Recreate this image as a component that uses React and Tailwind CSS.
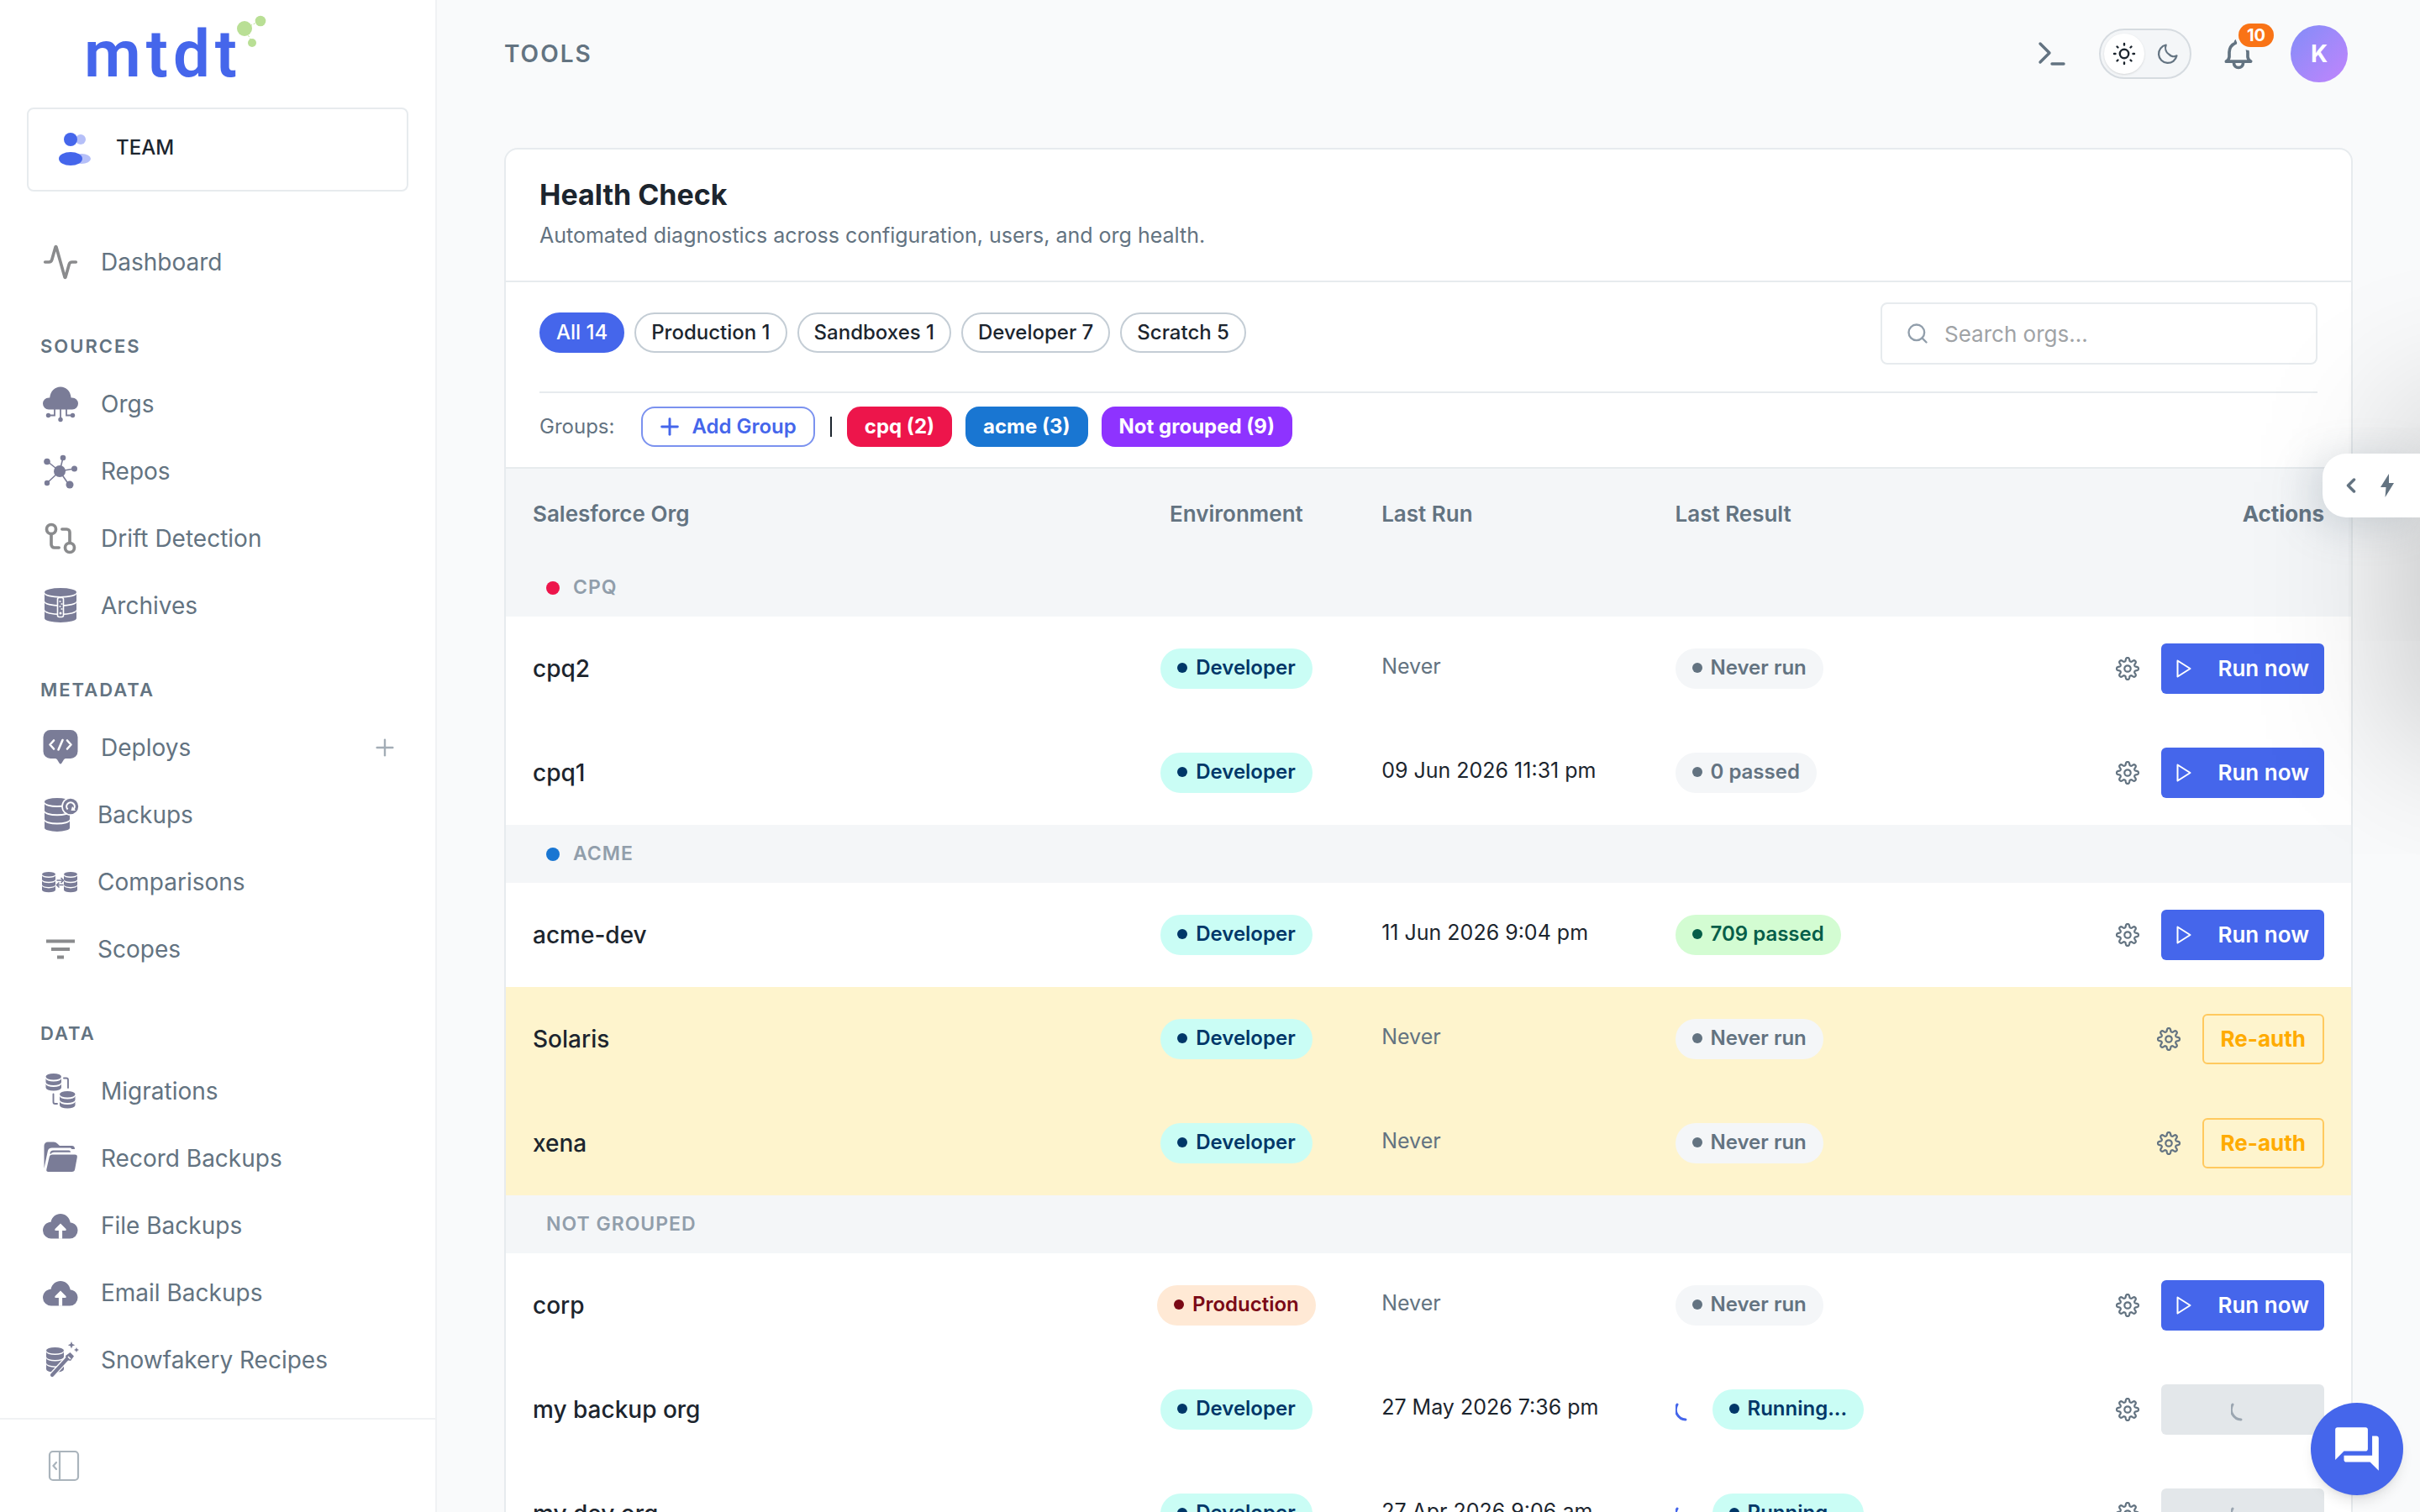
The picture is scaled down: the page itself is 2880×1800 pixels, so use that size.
import React from "react";
import { Activity, GitCompare, Plus, Search, ChevronLeft } from "lucide-react";
import { MdForum } from "react-icons/md";

const SLATE = "#7a7c97";

/* ---------- drawing helpers ---------- */

function Disks({ x, y, w, band, gap, ry, count, fill = SLATE }) {
  const rx = w / 2;
  const bands = [];
  for (let i = 0; i < count; i++) {
    const top = y + ry + gap + i * (band + gap);
    bands.push(
      <path
        key={i}
        d={`M${x} ${top}a${rx} ${ry} 0 0 0 ${w} 0v${band}a${rx} ${ry} 0 0 1 ${-w} 0z`}
        fill={fill}
      />
    );
  }
  return (
    <g>
      <ellipse cx={x + rx} cy={y + ry} rx={rx} ry={ry} fill={fill} />
      {bands}
    </g>
  );
}

function Icon44({ children }) {
  return (
    <svg viewBox="0 0 44 44" className="size-11 shrink-0" aria-hidden="true">
      {children}
    </svg>
  );
}

const OrgsIcon = () => (
  <Icon44>
    <path
      d="M8 28.5a7 7 0 0 1 0-14h1.2C10 6.500 15.500 1.500 22 1.500S34 6.500 34.600 14.500H36a7 7 0 0 1 0 14z"
      fill={SLATE}
    />
    <g stroke={SLATE} strokeWidth="1.800" fill="none">
      <path d="M22 28v12M15 28v7.500H8M29 28v7.500h7" />
    </g>
    <circle cx="7.500" cy="35.500" r="2.700" fill={SLATE} />
    <circle cx="36.500" cy="35.500" r="2.700" fill={SLATE} />
    <circle cx="22" cy="40.500" r="2.700" fill={SLATE} />
  </Icon44>
);

const ReposIcon = () => (
  <Icon44>
    <g stroke={SLATE} strokeWidth="1.600">
      <path d="M21 22 6 10M21 22l4-16M21 22l17-3M21 22 6 36M21 22l11 16" />
    </g>
    <circle cx="21" cy="22" r="7" fill={SLATE} />
    <circle cx="6" cy="10.500" r="3.800" fill={SLATE} />
    <circle cx="25" cy="6" r="3.300" fill={SLATE} />
    <circle cx="38.500" cy="19" r="3.500" fill={SLATE} />
    <circle cx="6" cy="36" r="3.200" fill={SLATE} />
    <circle cx="33" cy="38" r="4.500" fill={SLATE} />
  </Icon44>
);

const ArchivesIcon = () => (
  <Icon44>
    <Disks x={3} y={1} w={38} ry={5} band={8.6} gap={1.7} count={3} />
    <rect x="18.500" y="12.500" width="7" height="23" rx="2" fill={SLATE} stroke="#fff" strokeWidth="1.600" />
    <path d="M20.500 17h2M22.500 20h2M20.500 23h2M22.500 26h2" stroke="#fff" strokeWidth="1.600" />
    <circle cx="22" cy="31" r="1.500" fill="#fff" />
  </Icon44>
);

const DeploysIcon = () => (
  <Icon44>
    <path
      d="M10 1h24a8.500 8.500 0 0 1 8.500 8.500v17A8.500 8.500 0 0 1 34 35h-5.500q-1.500 0-2.500 1.300l-2.600 4.300q-1.400 2-2.800 0L18 36.300Q17 35 15.500 35H10a8.500 8.500 0 0 1-8.500-8.500v-17A8.500 8.500 0 0 1 10 1z"
      fill={SLATE}
    />
    <path
      d="M14 13.500 9.500 18.500l4.500 5M30 13.500l4.500 5-4.500 5M24.500 13l-5 11.500"
      fill="none"
      stroke="#fff"
      strokeWidth="2.600"
      strokeLinecap="round"
      strokeLinejoin="round"
    />
  </Icon44>
);

const BackupsIcon = () => (
  <Icon44>
    <Disks x={3} y={2} w={30} ry={4.5} band={8.3} gap={2} count={3} />
    <circle cx="34" cy="12" r="10.800" fill="#fff" />
    <circle cx="34" cy="12" r="9.200" fill={SLATE} />
    <path d="M30.600 15.500a4.800 4.800 0 1 1 6.800 0" fill="none" stroke="#fff" strokeWidth="2.200" />
    <path d="M34.500 17h5.500l-4-5z" fill="#fff" />
  </Icon44>
);

const ComparisonsIcon = () => (
  <Icon44>
    <Disks x={0} y={10} w={16} ry={2.8} band={4.8} gap={1.4} count={3} />
    <Disks x={26} y={10} w={16} ry={2.8} band={4.8} gap={1.4} count={3} />
    <g fill="none" stroke="#fff" strokeWidth="5">
      <path d="M17 20h8M17 25.500h8" />
    </g>
    <g fill="none" stroke={SLATE} strokeWidth="1.600">
      <path d="M17.500 20h8M22.500 17l3 3-3 3M25.500 25.500h-8M20.500 22.500l-3 3 3 3" />
    </g>
  </Icon44>
);

const ScopesIcon = () => (
  <Icon44>
    <g fill="#8a8b8d">
      <rect x="5" y="10.500" width="34" height="4" />
      <rect x="11" y="20" width="22" height="4" />
      <rect x="18" y="29.500" width="8" height="4" />
    </g>
  </Icon44>
);

const MigrationsIcon = () => (
  <Icon44>
    <Disks x={4.5} y={1} w={18.5} ry={3.8} band={4.6} gap={1.9} count={2} />
    <Disks x={21} y={22} w={18.5} ry={3.8} band={4.6} gap={1.9} count={2} />
    <g fill="none" stroke={SLATE} strokeWidth="1.900" strokeLinecap="round">
      <path d="M26 6.500h3a2 2 0 0 1 2 2V18" />
      <path d="M13.500 25.500v9.500a2 2 0 0 0 2 2H18" />
    </g>
  </Icon44>
);

const FolderIcon = () => (
  <Icon44>
    <path d="M2.500 34V7a4.500 4.500 0 0 1 4.500-4.500h7q2.500 0 4 1.700L21 7h14.500q3.500 0 3.500 4h-3.500L34 9.500H12q-4.500 0-5.200 4z" fill={SLATE} />
    <path d="M9.500 16q.300-3.500 4-3.500H32q2 0 2 2.200H14q-3 0-4 2.500z" fill={SLATE} />
    <path
      d="M12.500 17.500H39q3.300 0 2.800 3.300l-2.600 14q-.500 3.200-3.700 3.200H7.500q-2.700 0-2.200-2.700l3.300-14.600q.600-3.200 3.900-3.200z"
      fill={SLATE}
    />
  </Icon44>
);

const CloudUpIcon = () => (
  <Icon44>
    <path
      d="M11 37.500A9.800 9.800 0 0 1 1 28c0-5.600 4.200-10 9.500-10.200C12 11.500 16.500 8 22 8s10.500 4 11.800 10.500c5.200.500 8.700 4.200 8.700 9.300a9.500 9.500 0 0 1-9.500 9.700z"
      fill={SLATE}
    />
    <path d="M22 19.500 15.500 26q-.800 2 1.200 2h3.200v9.700h4.200V28h3.200q2 0 1.200-2z" fill="#fff" />
  </Icon44>
);

const RecipesIcon = () => (
  <Icon44>
    <Disks x={5} y={7} w={21} ry={3.8} band={5.9} gap={1.5} count={3} />
    <path d="M11 41 33 17" stroke="#fff" strokeWidth="7" />
    <path d="M12 40 30 20.500" stroke={SLATE} strokeWidth="4.200" strokeLinecap="round" />
    <path d="m29 22-1-5 5.500-4 4.500 4.500-4 5.500z" fill={SLATE} />
    <path d="m31 18 3 3" stroke="#fff" strokeWidth="1.500" />
    <path d="m35 0 1.200 3 3 1.200-3 1.200L35 8.400l-1.200-3-3-1.200 3-1.200zM41 7l.900 2.100 2.100.900-2.100.900L41 13l-.900-2.100L38 10l2.100-.900z" fill={SLATE} />
  </Icon44>
);

const gearPath = (() => {
  const pts = [];
  for (let i = 0; i < 192; i++) {
    const a = (i / 192) * Math.PI * 2;
    const r = 11 + 2.1 * Math.tanh(1.6 * Math.cos(8 * a));
    pts.push(`${(16 + r * Math.cos(a)).toFixed(2)} ${(16 + r * Math.sin(a)).toFixed(2)}`);
  }
  return `M${pts.join("L")}Z`;
})();

const Gear = () => (
  <svg viewBox="0 0 32 32" className="size-8" fill="none" stroke="#637381" strokeWidth="2.200" aria-hidden="true">
    <path d={gearPath} strokeLinejoin="round" />
    <circle cx="16" cy="16" r="3.700" />
  </svg>
);

/* ---------- sidebar ---------- */

const NAV = [
  {
    title: "SOURCES",
    items: [
      { label: "Orgs", icon: <OrgsIcon /> },
      { label: "Repos", icon: <ReposIcon /> },
      { label: "Drift Detection", icon: <GitCompare className="size-11 shrink-0 text-[#8a8b8d]" /> },
      { label: "Archives", icon: <ArchivesIcon /> },
    ],
  },
  {
    title: "METADATA",
    items: [
      { label: "Deploys", icon: <DeploysIcon />, add: true },
      { label: "Backups", icon: <BackupsIcon />, tight: true },
      { label: "Comparisons", icon: <ComparisonsIcon />, tight: true },
      { label: "Scopes", icon: <ScopesIcon />, tight: true },
    ],
  },
  {
    title: "DATA",
    items: [
      { label: "Migrations", icon: <MigrationsIcon /> },
      { label: "Record Backups", icon: <FolderIcon /> },
      { label: "File Backups", icon: <CloudUpIcon /> },
      { label: "Email Backups", icon: <CloudUpIcon /> },
      { label: "Snowfakery Recipes", icon: <RecipesIcon /> },
    ],
  },
];

function NavItem({ label, icon, add, tight }) {
  return (
    <li className="flex h-20 items-center pr-3">
      <a href="#" className={`flex flex-1 items-center pl-[18px] text-[28px] text-[#637381] ${tight ? "gap-[22px]" : "gap-[26px]"}`}>
        {icon}
        {label}
      </a>
      {add && (
        <button aria-label="New deploy" className="text-[#a3adb6]">
          <Plus className="size-8" strokeWidth={1.8} />
        </button>
      )}
    </li>
  );
}

function Sidebar() {
  return (
    <aside className="flex w-[520px] shrink-0 flex-col border-r-2 border-[#f0f2f4] bg-white">
      <div className="flex h-32 items-start pl-[100px]">
        <a href="#" aria-label="mtdt home">
          <svg viewBox="0 0 220 110" className="h-[110px] w-[220px]">
            <text x="0" y="91" fontFamily="Roboto, sans-serif" fontWeight="600" fontSize="78" fill="#4566eb" className="tracking-[6px]">
              mtdt
            </text>
            <path d="m191 34 18-9M192 35l8 16" stroke="#b9df95" strokeWidth="1" strokeDasharray="2 2" />
            <circle cx="191" cy="34" r="9" fill="#b9df95" />
            <circle cx="210" cy="25" r="6.300" fill="#b9df95" />
            <circle cx="200" cy="51" r="5" fill="#b9df95" />
          </svg>
        </a>
      </div>
      <button className="mx-8 flex h-[100px] items-center gap-6 rounded-lg border-2 border-[#e7ebee] pb-1 pl-9 text-2xl font-medium text-[#1c252e]">
        <svg viewBox="0 0 44 44" className="size-11" aria-hidden="true">
          <circle cx="26" cy="12" r="6" fill="#b5bff8" />
          <ellipse cx="27" cy="35" rx="11" ry="6" fill="#b5bff8" />
          <circle cx="14" cy="12" r="8" fill="#4566eb" />
          <ellipse cx="14" cy="35" rx="14" ry="8" fill="#4566eb" />
        </svg>
        TEAM
      </button>
      <nav className="flex-1 px-8 pt-11">
        <ul>
          <NavItem label="Dashboard" icon={<Activity className="size-11 shrink-0 text-[#8a8b8d]" />} />
        </ul>
        {NAV.map((g) => (
          <section key={g.title} className="pt-8">
            <h2 className="flex h-[57px] items-center pl-4 text-[22px] font-semibold tracking-[2px] text-[#637381]">{g.title}</h2>
            <ul>
              {g.items.map((it) => (
                <NavItem key={it.label} {...it} />
              ))}
            </ul>
          </section>
        ))}
      </nav>
      <div className="flex h-28 shrink-0 items-center border-t-2 border-[#f0f2f4] pl-14">
        <button aria-label="Collapse sidebar">
          <svg viewBox="0 0 40 40" className="size-10" fill="none" stroke="#aab4bc" strokeWidth="2.200" aria-hidden="true">
            <rect x="3" y="3" width="34" height="34" rx="4" />
            <path d="M15 3v34" />
            <path d="m11 16-3.500 4 3.500 4" strokeLinecap="round" />
          </svg>
        </button>
      </div>
    </aside>
  );
}

/* ---------- top bar ---------- */

function TopBar() {
  return (
    <header className="flex h-32 shrink-0 items-center justify-between pl-20 pr-[86px]">
      <h1 className="text-[28px] font-semibold tracking-[2px] text-[#637381]">TOOLS</h1>
      <div className="flex items-center">
        <button aria-label="Terminal" className="mr-[38px]">
          <svg viewBox="0 0 36 36" className="size-9" fill="none" stroke="#637381" strokeWidth="3.400" strokeLinecap="round" strokeLinejoin="round" aria-hidden="true">
            <path d="m4 6 11 11L4 28M18 30h14" />
          </svg>
        </button>
        <button aria-label="Toggle theme" className="mr-[34px] flex h-[60px] w-[110px] items-center gap-1 rounded-full border-2 border-[#d6dbe0] bg-[#f4f6f8] pl-1">
          <span className="flex size-12 items-center justify-center rounded-full bg-white shadow-sm">
            <svg viewBox="0 0 28 28" className="size-7" fill="none" stroke="#1c252e" strokeWidth="2.400" strokeLinecap="round" aria-hidden="true">
              <circle cx="14" cy="14" r="5.200" />
              <path d="M14 2v1.500M14 24.500V26M2 14h1.500M24.500 14H26M5.500 5.500l1 1M21.500 21.500l1 1M5.500 22.500l1-1M21.500 6.500l1-1" />
            </svg>
          </span>
          <span className="flex size-12 items-center justify-center">
            <svg viewBox="0 0 24 24" className="size-7" fill="none" stroke="#637381" strokeWidth="1.900" strokeLinejoin="round" aria-hidden="true">
              <path d="M10 3a9.300 9.300 0 1 0 11 11 6.500 6.500 0 0 1-8-1.500A8 8 0 0 1 10 3z" />
            </svg>
          </span>
        </button>
        <button aria-label="Notifications, 10 unread" className="relative mr-5 pr-5">
          <svg viewBox="0 0 24 24" className="size-11" fill="none" stroke="#637381" strokeWidth="2" strokeLinecap="round" strokeLinejoin="round" aria-hidden="true">
            <path d="M10 5a2 2 0 1 1 4 0a7 7 0 0 1 4 6v3a4 4 0 0 0 2 3h-16a4 4 0 0 0 2-3v-3a7 7 0 0 1 4-6M9 17v1a3 3 0 0 0 6 0v-1" />
          </svg>
          <span className="absolute -top-3.5 left-[22px] flex h-7 w-[42px] items-center justify-center rounded-full bg-[#f97316] text-xl font-bold text-white ring-4 ring-[#f9fafb]">
            10
          </span>
        </button>
        <button aria-label="Account" className="flex size-[68px] items-center justify-center rounded-full bg-linear-to-br from-[#818cf8] to-[#c084fc] text-[28px] font-bold text-white">
          K
        </button>
      </div>
    </header>
  );
}

/* ---------- health check ---------- */

const FILTERS = ["All 14", "Production 1", "Sandboxes 1", "Developer 7", "Scratch 5"];

const TONES = {
  Developer: "bg-[#cafdf5] text-[#003768]",
  Production: "bg-[#ffe9d5] text-[#7a0916]",
  "Never run": "bg-[#f4f6f8] text-[#637381]",
  "0 passed": "bg-[#f4f6f8] text-[#637381]",
  "709 passed": "bg-[#d3fcd2] text-[#065e49]",
  "Running...": "bg-[#cafdf5] text-[#003768]",
};

const GROUPS = [
  {
    name: "CPQ",
    dot: "bg-[#ed154b]",
    rows: [
      { org: "cpq2", env: "Developer", result: "Never run" },
      { org: "cpq1", env: "Developer", run: "09 Jun 2026 11:31 pm", result: "0 passed" },
    ],
  },
  {
    name: "ACME",
    dot: "bg-[#1976d2]",
    rows: [
      { org: "acme-dev", env: "Developer", run: "11 Jun 2026 9:04 pm", result: "709 passed" },
      { org: "Solaris", env: "Developer", result: "Never run", expired: true },
      { org: "xena", env: "Developer", result: "Never run", expired: true },
    ],
  },
  {
    name: "NOT GROUPED",
    rows: [
      { org: "corp", env: "Production", result: "Never run" },
      { org: "my backup org", env: "Developer", run: "27 May 2026 7:36 pm", result: "Running..." },
      { org: "my dev org", env: "Developer", run: "27 Apr 2026 9:06 am", result: "Running..." },
    ],
  },
];

function Badge({ children }) {
  return (
    <span className={`inline-flex h-12 items-center gap-2.5 rounded-full px-5 pb-0.5 align-middle text-2xl font-semibold ${TONES[children]}`}>
      <span className="size-3 rounded-full bg-current" />
      {children}
    </span>
  );
}

function Arc({ color }) {
  return (
    <svg viewBox="0 0 28 28" className="size-7" fill="none" stroke={color} strokeWidth="3" strokeLinecap="round" aria-hidden="true">
      <path d="M2 8A12 12 0 0 0 12 26" />
    </svg>
  );
}

function Row({ org, env, run, result, expired }) {
  const running = result === "Running...";
  return (
    <tr className={`h-[124px] ${expired ? "bg-[#fef4cd]" : ""}`}>
      <td className="pl-8 text-[28px] font-medium text-[#1c252e]">{org}</td>
      <td className="pl-1 text-center">
        <Badge>{env}</Badge>
      </td>
      <td className={`pb-1 pl-8 text-[25px] ${run ? "text-[#1c252e]" : "text-[#637381]"}`}>{run || "Never"}</td>
      <td className="pl-[30px]">
        <div className="flex items-center gap-4">
          {running && <Arc color="#4566eb" />}
          <Badge>{result}</Badge>
        </div>
      </td>
      <td className="pr-8">
        <div className="flex items-center justify-end gap-6">
          <button aria-label={`Settings for ${org}`}>
            <Gear />
          </button>
          {expired ? (
            <button className="h-[60px] rounded-md border-2 border-[#ffc95e] px-5 pb-0.5 text-[26px] font-bold text-[#ffab00]">Re-auth</button>
          ) : running ? (
            <button disabled aria-label={`${org} is running`} className="flex h-[60px] w-[194px] items-center justify-center rounded-md bg-[#e3e7ea]">
              <Arc color="#9ba6b1" />
            </button>
          ) : (
            <button className="flex h-[60px] w-[194px] items-center justify-between rounded-md bg-[#4566eb] px-[18px] text-[26px] font-semibold text-white">
              <svg viewBox="0 0 18 22" className="h-[22px] w-[18px]" fill="none" stroke="#fff" strokeWidth="2" strokeLinejoin="round" aria-hidden="true">
                <path d="m1.500 1.500 15 9.500-15 9.500z" />
              </svg>
              <span className="pb-0.5">Run now</span>
            </button>
          )}
        </div>
      </td>
    </tr>
  );
}

function HealthCheck() {
  return (
    <section className="overflow-hidden rounded-t-2xl border-2 border-[#e7ebee] bg-white">
      <div className="flex flex-col gap-2 border-b-2 border-[#e7ebee] px-10 pb-9 pt-8">
        <h2 className="text-[34px] leading-[44px] font-bold text-[#1c252e]">Health Check</h2>
        <p className="text-[25px] leading-9 text-[#637381]">Automated diagnostics across configuration, users, and org health.</p>
      </div>

      <div className="flex flex-col border-b-2 border-[#e7ebee] px-10">
        <div className="flex items-start justify-between border-b-2 border-[#e7ebee] pt-6 pb-8">
          <div className="flex gap-3 pt-3">
            {FILTERS.map((f, i) => (
              <button
                key={f}
                className={`h-12 rounded-full border-2 px-[18px] text-2xl leading-none font-medium ${
                  i === 0 ? "border-[#4566eb] bg-[#4566eb] text-white" : "border-[#c4cdd5] text-[#1c252e]"
                }`}
              >
                {f}
              </button>
            ))}
          </div>
          <label className="flex h-[74px] w-[520px] items-center gap-[18px] rounded-lg border-2 border-[#e7ebee] pl-7">
            <Search className="size-7 text-[#919eab]" />
            <span className="sr-only">Search orgs</span>
            <input type="search" placeholder="Search orgs..." className="min-w-0 flex-1 text-[26px] text-[#1c252e] outline-none placeholder:text-[#a0a3a6]" />
          </label>
        </div>
        <div className="flex h-[88px] items-center pb-2">
          <span className="mr-8 text-2xl text-[#637381]">Groups:</span>
          <button className="flex h-12 items-center gap-2.5 rounded-2xl border-2 border-[#7b92ef] pr-5 pl-4 text-2xl font-semibold text-[#4566eb]">
            <Plus className="size-8" strokeWidth={2.2} />
            Add Group
          </button>
          <span className="mx-[18px] h-6 w-0.5 bg-[#1c252e]" />
          <div className="flex gap-4">
            <button className="h-12 rounded-2xl bg-[#ed154b] px-[21px] text-2xl font-bold text-white">cpq (2)</button>
            <button className="h-12 rounded-2xl bg-[#1976d2] px-[21px] text-2xl font-bold text-white">acme (3)</button>
            <button className="h-12 rounded-2xl bg-[#8e33ff] px-[21px] text-2xl font-bold text-white">Not grouped (9)</button>
          </div>
        </div>
      </div>

      <table className="w-full table-fixed border-collapse">
        <thead>
          <tr className="h-[107px] bg-[#f4f6f8] text-left text-[26px] text-[#637381]">
            <th className="w-[33%] pl-8 font-semibold">Salesforce Org</th>
            <th className="w-[13%] pl-1 text-center font-semibold">Environment</th>
            <th className="w-[16%] pl-8 font-semibold">Last Run</th>
            <th className="w-[17%] pl-[30px] font-semibold">Last Result</th>
            <th className="pr-8 text-right font-bold">Actions</th>
          </tr>
        </thead>
        {GROUPS.map((g) => (
          <tbody key={g.name}>
            <tr className="h-[69px] bg-[#f4f6f8]">
              <th colSpan={5} className="pl-12 text-left text-[23px] font-semibold tracking-[1px] text-[#919eab]">
                <span className="flex items-center gap-4">
                  {g.dot && <span className={`size-4 rounded-full ${g.dot}`} />}
                  {g.name}
                </span>
              </th>
            </tr>
            {g.rows.map((r) => (
              <Row key={r.org} {...r} />
            ))}
          </tbody>
        ))}
      </table>
    </section>
  );
}

export default function App() {
  return (
    <div className="relative flex h-screen overflow-hidden bg-[#f9fafb] font-['Inter',sans-serif] leading-normal">
      <Sidebar />
      <div className="flex min-w-0 flex-1 flex-col">
        <TopBar />
        <main className="min-h-0 flex-1 overflow-hidden px-20 pt-12">
          <HealthCheck />
        </main>
      </div>

      <div className="pointer-events-none absolute top-[500px] left-full h-[370px] w-80 shadow-[0_0_180px_10px_rgba(0,0,0,0.28)]" />
      <button
        aria-label="Open quick actions"
        className="absolute top-[540px] right-0 flex h-[76px] w-[116px] items-center gap-5 rounded-l-[28px] bg-white pl-5 text-[#637381] shadow-[-12px_8px_48px_rgba(120,135,150,0.28)]"
      >
        <ChevronLeft className="size-7" strokeWidth={3} />
        <svg viewBox="0 0 18 30" className="h-[30px] w-[18px]" fill="#637381" aria-hidden="true">
          <path d="M11 1 1 17h6.500L6.500 29 17 12h-6z" />
        </svg>
      </button>
      <button
        aria-label="Open chat"
        className="absolute right-5 bottom-5 flex size-[110px] items-center justify-center rounded-full bg-[#4566eb] text-white shadow-lg"
      >
        <MdForum className="size-[62px]" />
      </button>
    </div>
  );
}
